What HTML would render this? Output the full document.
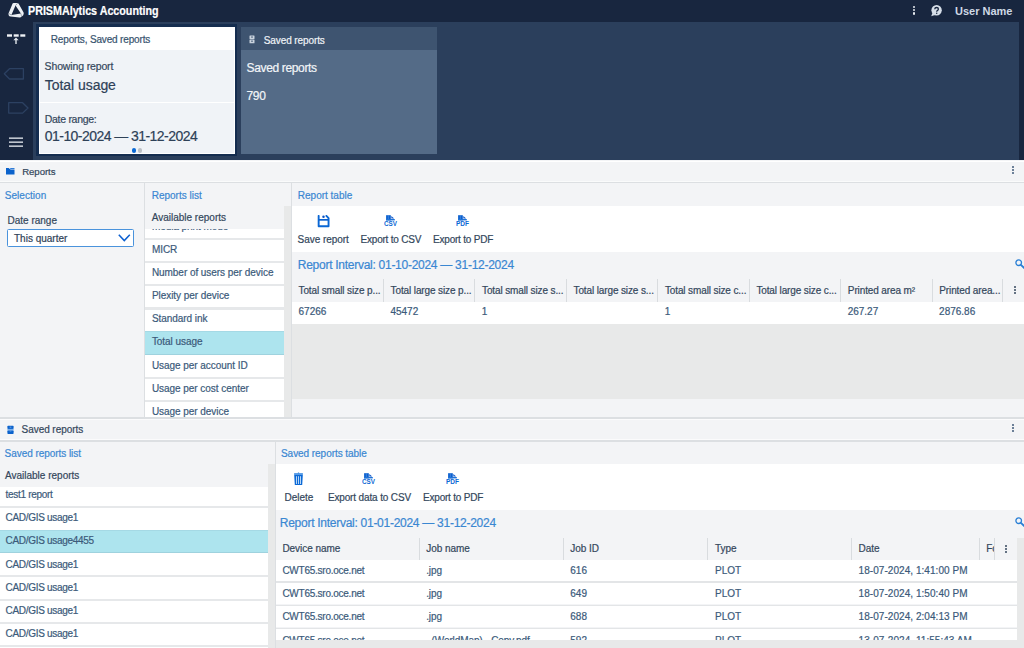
<!DOCTYPE html>
<html><head><meta charset="utf-8"><style>
html,body{margin:0;padding:0;width:1024px;height:648px;overflow:hidden;background:#f3f4f6}
body{position:relative;font-family:"Liberation Sans", sans-serif}
div{position:absolute}
.t{white-space:nowrap;line-height:1;-webkit-text-stroke:0.2px currentColor}
</style></head><body>
<div style="left:0px;top:0px;width:1024px;height:160px;background:#18263f;"></div>
<div style="left:33px;top:22px;width:986px;height:138px;background:#2b3f5c;"></div>
<svg style="position:absolute;left:4px;top:0px" width="24" height="22" viewBox="0 0 24 22">
<path fill-rule="evenodd" fill="#eef1f5" d="M9.6 2.9 L13.4 2.9 Q14.2 3 14.8 4 L19.6 12.4 Q20.1 13.6 19.2 15.2 L17.3 17.1 Q16.6 17.6 15.6 17.5 L6.6 16.6 Q5.2 16.4 4.8 15.4 L4.5 14.2 Q4.4 13.4 4.9 12.5 L8.6 3.6 Q9 2.9 9.6 2.9 Z M11.5 5.6 L7.4 15 L16.9 13.5 Z"/>
<path d="M11.5 5.6 L13.6 3.2 M7.4 15 L5 13.6 M16.9 13.5 L17.6 16.9" stroke="#4a586c" stroke-width="0.5" fill="none"/>
</svg>
<div class="t" style="left:28px;top:5.04px;font-size:12px;color:#ffffff;font-weight:700;transform:scaleX(0.893);transform-origin:0 0;">PRISMAlytics Accounting</div>
<div style="left:912.75px;top:5.8500000000000005px;width:2.1px;height:2.1px;background:#e6ebf1;border-radius:50%;"></div>
<div style="left:912.75px;top:9.15px;width:2.1px;height:2.1px;background:#e6ebf1;border-radius:50%;"></div>
<div style="left:912.75px;top:12.45px;width:2.1px;height:2.1px;background:#e6ebf1;border-radius:50%;"></div>
<svg style="position:absolute;left:930px;top:5px" width="13" height="12" viewBox="0 0 13 12">
<circle cx="6.6" cy="5.3" r="5.2" fill="#d6dee8"/><path d="M2.4 8 L1.2 11.3 L5 9.9 Z" fill="#d6dee8"/>
<path d="M4.7 4.2 Q4.8 2.5 6.6 2.5 Q8.4 2.5 8.4 4.1 Q8.4 5.1 7.3 5.6 Q6.7 5.9 6.7 6.8" fill="none" stroke="#18263f" stroke-width="1.3"/>
<circle cx="6.7" cy="8.3" r="0.75" fill="#18263f"/></svg>
<div class="t" style="left:955px;top:5.59px;font-size:11px;color:#cfd9e5;font-weight:700;-webkit-text-stroke:0;">User Name</div>
<svg style="position:absolute;left:0;top:28px" width="33" height="132" viewBox="0 0 33 132">
<rect x="7" y="6.3" width="5" height="2.4" fill="#eef1f5"/><rect x="13.7" y="6.3" width="5" height="2.4" fill="#eef1f5"/><rect x="20.3" y="6.3" width="5" height="2.4" fill="#eef1f5"/>
<path d="M16 9.5 L13.3 12.3 H15.3 V16 H16.7 V12.3 H18.7 Z" fill="#dfe4ea"/>
<path d="M4.3 45.7 L9.5 40.7 H23.4 V51 H9.5 Z" fill="none" stroke="#2c4162" stroke-width="1.3" stroke-linejoin="round"/>
<path d="M8.7 74.7 H22.6 L28 80 L22.6 85.1 H8.7 Z" fill="none" stroke="#2c4162" stroke-width="1.3" stroke-linejoin="round"/>
<rect x="9" y="109.5" width="14" height="1.3" fill="#e8ecf1"/><rect x="9" y="113.5" width="14" height="1.3" fill="#e8ecf1"/><rect x="9" y="117.5" width="14" height="1.3" fill="#e8ecf1"/>
</svg>
<div style="left:36.4px;top:24.4px;width:200.8px;height:132px;background:#152d4f;"></div>
<div style="left:39px;top:27px;width:196px;height:127px;background:#f0f3f7;"></div>
<div style="left:39px;top:27px;width:196px;height:23px;background:#ffffff;"></div>
<div style="left:39px;top:101.5px;width:196px;height:1.2px;background:#ffffff;"></div>
<div style="left:39px;top:27px;width:1px;height:127px;background:#ffffff;"></div>
<div style="left:234.3px;top:27px;width:0.7px;height:127px;background:#ffffff;"></div>
<div style="left:39px;top:153.3px;width:196px;height:0.7px;background:#ffffff;"></div>
<div class="t" style="left:50.8px;top:35.14px;font-size:10px;color:#37536e;font-weight:400;letter-spacing:-0.16px;">Reports, Saved reports</div>
<div class="t" style="left:44.6px;top:61.11px;font-size:10.5px;color:#34475c;font-weight:400;letter-spacing:-0.14px;">Showing report</div>
<div class="t" style="left:44.8px;top:77.55px;font-size:14px;color:#2e4157;font-weight:400;letter-spacing:-0.05px;">Total usage</div>
<div class="t" style="left:44.8px;top:114.11px;font-size:10.5px;color:#34475c;font-weight:400;letter-spacing:-0.3px;">Date range:</div>
<div class="t" style="left:44.8px;top:128.55px;font-size:14px;color:#2e4157;font-weight:400;letter-spacing:-0.55px;">01-10-2024 — 31-12-2024</div>
<div style="left:132.0px;top:148.4px;width:4.4px;height:4.4px;background:#0b6ad6;border-radius:50%;"></div>
<div style="left:137.9px;top:148.4px;width:4.2px;height:4.2px;background:#bcc1c6;border-radius:50%;"></div>
<div style="left:241px;top:27px;width:196px;height:127px;background:#546b87;"></div>
<div style="left:241px;top:27px;width:196px;height:23px;background:#3e5470;"></div>
<svg style="position:absolute;left:249px;top:34.5px" width="6" height="9" viewBox="0 0 6 9">
<rect x="0.5" y="0.5" width="5" height="3.4" rx="0.5" fill="#c9d3de"/><rect x="0.5" y="4.6" width="5" height="3.6" rx="0.5" fill="#c9d3de"/><rect x="2" y="1.6" width="2" height="0.9" fill="#3e5470"/><rect x="2" y="5.7" width="2" height="0.9" fill="#3e5470"/></svg>
<div class="t" style="left:263.8px;top:35.64px;font-size:10px;color:#eef2f6;font-weight:400;letter-spacing:-0.1px;">Saved reports</div>
<div class="t" style="left:246.5px;top:62.34px;font-size:12px;color:#f2f5f8;font-weight:400;letter-spacing:-0.35px;">Saved reports</div>
<div class="t" style="left:246.5px;top:90.34px;font-size:12px;color:#f2f5f8;font-weight:400;letter-spacing:-0.3px;">790</div>
<div style="left:0px;top:160px;width:1024px;height:488px;background:#f3f4f6;"></div>
<div style="left:0px;top:160.8px;width:1024px;height:1.2px;background:#ffffff;"></div>
<div style="left:0px;top:181px;width:1024px;height:0.8px;background:#fafbfb;"></div>
<div style="left:0px;top:181.8px;width:1024px;height:1px;background:#dcdfe2;"></div>
<svg style="position:absolute;left:5.7px;top:168px" width="9" height="7" viewBox="0 0 9 7">
<path d="M0 0.1 H2.6 L4.6 1.5 H8.5 V6.4 H0 Z" fill="#0b62cc"/><rect x="4.2" y="0.1" width="4.3" height="0.9" fill="#1a6fd4"/></svg>
<div class="t" style="left:22.2px;top:166.57px;font-size:9.6px;color:#33475c;font-weight:400;letter-spacing:-0.05px;">Reports</div>
<div style="left:1012.0500000000001px;top:165.64999999999998px;width:2.1px;height:2.1px;background:#3f5a78;border-radius:50%;"></div>
<div style="left:1012.0500000000001px;top:168.95px;width:2.1px;height:2.1px;background:#3f5a78;border-radius:50%;"></div>
<div style="left:1012.0500000000001px;top:172.24999999999997px;width:2.1px;height:2.1px;background:#3f5a78;border-radius:50%;"></div>
<div style="left:144px;top:182.8px;width:1px;height:235px;background:#dcdfe2;"></div>
<div class="t" style="left:4.7px;top:190.53px;font-size:10px;color:#3a87d2;font-weight:400;letter-spacing:0.05px;">Selection</div>
<div class="t" style="left:7.5px;top:215.84px;font-size:10px;color:#33475c;font-weight:400;">Date range</div>
<div style="left:7.2px;top:229px;width:126.4px;height:17.6px;background:#ffffff;box-sizing:border-box;border:1px solid #4a93dc;border-radius:1.5px;"></div>
<div class="t" style="left:14px;top:233.53px;font-size:10px;color:#2f4257;font-weight:400;">This quarter</div>
<svg style="position:absolute;left:118px;top:234px" width="13" height="8" viewBox="0 0 13 8">
<path d="M0.8 0.8 L6.3 6.6 L11.8 0.8" fill="none" stroke="#0b5fd0" stroke-width="1.5"/></svg>
<div style="left:291px;top:182.8px;width:1px;height:235px;background:#dcdfe2;"></div>
<div class="t" style="left:151.7px;top:190.53px;font-size:10px;color:#3a87d2;font-weight:400;">Reports list</div>
<div class="t" style="left:151.7px;top:212.94px;font-size:10px;color:#33475c;font-weight:400;">Available reports</div>
<div style="left:284px;top:206px;width:7px;height:212px;background:#e8e9e9;"></div>
<div style="left:145px;top:228.8px;width:139px;height:189px;overflow:hidden;background:#fff">
<div class="t" style="left:6.9px;top:-6.46px;font-size:10px;color:#3b5a7a;font-weight:400;letter-spacing:-0.05px;">media print mode</div>
<div style="left:0px;top:9.099999999999989px;width:139px;height:2.1px;background:#e6e8ea;"></div>
<div class="t" style="left:6.9px;top:15.73px;font-size:10px;color:#3b5a7a;font-weight:400;letter-spacing:-0.05px;">MICR</div>
<div style="left:0px;top:32.299999999999976px;width:139px;height:2.1px;background:#e6e8ea;"></div>
<div class="t" style="left:6.9px;top:38.93px;font-size:10px;color:#3b5a7a;font-weight:400;letter-spacing:-0.05px;">Number of users per device</div>
<div style="left:0px;top:55.499999999999964px;width:139px;height:2.1px;background:#e6e8ea;"></div>
<div class="t" style="left:6.9px;top:62.13px;font-size:10px;color:#3b5a7a;font-weight:400;letter-spacing:-0.05px;">Plexity per device</div>
<div style="left:0px;top:78.70000000000002px;width:139px;height:2.1px;background:#e6e8ea;"></div>
<div class="t" style="left:6.9px;top:85.34px;font-size:10px;color:#3b5a7a;font-weight:400;letter-spacing:-0.05px;">Standard ink</div>
<div style="left:0px;top:102.0px;width:139px;height:23.8px;background:#ade4ee;box-shadow:inset 0 1px 0 #a5d9e5, inset 0 -1px 0 #9fd2de;"></div>
<div class="t" style="left:6.9px;top:108.53px;font-size:10px;color:#3b5a7a;font-weight:400;letter-spacing:-0.05px;">Total usage</div>
<div class="t" style="left:6.9px;top:131.73px;font-size:10px;color:#3b5a7a;font-weight:400;letter-spacing:-0.05px;">Usage per account ID</div>
<div style="left:0px;top:148.30000000000004px;width:139px;height:2.1px;background:#e6e8ea;"></div>
<div class="t" style="left:6.9px;top:154.94px;font-size:10px;color:#3b5a7a;font-weight:400;letter-spacing:-0.05px;">Usage per cost center</div>
<div style="left:0px;top:171.49999999999997px;width:139px;height:2.1px;background:#e6e8ea;"></div>
<div class="t" style="left:6.9px;top:178.13px;font-size:10px;color:#3b5a7a;font-weight:400;letter-spacing:-0.05px;">Usage per device</div>
</div>
<div class="t" style="left:297.8px;top:190.84px;font-size:10px;color:#3a87d2;font-weight:400;">Report table</div>
<div style="left:292px;top:206px;width:732px;height:46px;background:#ffffff;"></div>
<svg style="position:absolute;left:316.5px;top:214.5px" width="13" height="13" viewBox="0 0 13 13">
<path d="M1.65 0.9 V11.2 H11.55 V3.1 L9.4 0.9" fill="none" stroke="#0a67d4" stroke-width="1.9" stroke-linejoin="round" stroke-linecap="round"/>
<rect x="1.65" y="4" width="9.9" height="1.7" fill="#0a62d0"/><circle cx="6.5" cy="1.8" r="1.25" fill="#0a52c4"/></svg>
<div class="t" style="left:297.6px;top:234.73px;font-size:10px;color:#33475c;font-weight:400;letter-spacing:-0.05px;">Save report</div>
<svg style="position:absolute;left:384.1px;top:214.3px" width="15" height="13" viewBox="0 0 15 13">
<path d="M2.1 1.2 H6.8 V6.4 H2.1 Z" fill="#0a5fcf"/><rect x="3.9" y="1.4" width="0.5" height="3.6" fill="#6aa6ea"/><path d="M7.3 1.9 L10.2 4.5 H7.3 Z" fill="#0a55c8"/><rect x="2.1" y="5" width="8.7" height="1.4" fill="#1f73d8"/>
<text x="0" y="12.1" font-family="Liberation Sans" font-weight="700" font-size="7.6" fill="#0a67d4" textLength="13" lengthAdjust="spacingAndGlyphs">CSV</text></svg>
<div class="t" style="left:360.5px;top:234.73px;font-size:10px;color:#33475c;font-weight:400;letter-spacing:-0.2px;">Export to CSV</div>
<svg style="position:absolute;left:456.4px;top:214.3px" width="15" height="13" viewBox="0 0 15 13">
<path d="M2.1 1.2 H6.8 V6.4 H2.1 Z" fill="#0a5fcf"/><rect x="3.9" y="1.4" width="0.5" height="3.6" fill="#6aa6ea"/><path d="M7.3 1.9 L10.2 4.5 H7.3 Z" fill="#0a55c8"/><rect x="2.1" y="5" width="8.7" height="1.4" fill="#1f73d8"/>
<text x="0" y="12.1" font-family="Liberation Sans" font-weight="700" font-size="7.6" fill="#0a67d4" textLength="13" lengthAdjust="spacingAndGlyphs">PDF</text></svg>
<div class="t" style="left:433px;top:234.73px;font-size:10px;color:#33475c;font-weight:400;letter-spacing:-0.2px;">Export to PDF</div>
<div class="t" style="left:297.8px;top:259.04px;font-size:12px;color:#3a87d2;font-weight:400;letter-spacing:-0.27px;">Report Interval: 01-10-2024 — 31-12-2024</div>
<svg style="position:absolute;left:1014.5px;top:258.6px" width="12" height="12" viewBox="0 0 12 12">
<circle cx="3.7" cy="3.7" r="2.8" fill="none" stroke="#2a7fd5" stroke-width="1.3"/><path d="M5.9 5.9 L9.5 9.2" stroke="#2a7fd5" stroke-width="1.9" stroke-linecap="round"/></svg>
<div class="t" style="left:298.55px;top:285.64px;font-size:10px;color:#33475c;font-weight:400;letter-spacing:-0.12px;">Total small size p...</div>
<div class="t" style="left:390.59999999999997px;top:285.64px;font-size:10px;color:#33475c;font-weight:400;letter-spacing:-0.12px;">Total large size p...</div>
<div style="left:382.79999999999995px;top:278.8px;width:1.2px;height:23.2px;background:#d9dcdf;"></div>
<div class="t" style="left:482.05px;top:285.64px;font-size:10px;color:#33475c;font-weight:400;letter-spacing:-0.12px;">Total small size s...</div>
<div style="left:474.25px;top:278.8px;width:1.2px;height:23.2px;background:#d9dcdf;"></div>
<div class="t" style="left:573.5px;top:285.64px;font-size:10px;color:#33475c;font-weight:400;letter-spacing:-0.12px;">Total large size s...</div>
<div style="left:565.6999999999999px;top:278.8px;width:1.2px;height:23.2px;background:#d9dcdf;"></div>
<div class="t" style="left:664.95px;top:285.64px;font-size:10px;color:#33475c;font-weight:400;letter-spacing:-0.12px;">Total small size c...</div>
<div style="left:657.15px;top:278.8px;width:1.2px;height:23.2px;background:#d9dcdf;"></div>
<div class="t" style="left:756.4000000000001px;top:285.64px;font-size:10px;color:#33475c;font-weight:400;letter-spacing:-0.12px;">Total large size c...</div>
<div style="left:748.6px;top:278.8px;width:1.2px;height:23.2px;background:#d9dcdf;"></div>
<div class="t" style="left:847.8500000000001px;top:285.64px;font-size:10px;color:#33475c;font-weight:400;letter-spacing:-0.12px;">Printed area m²</div>
<div style="left:840.0500000000001px;top:278.8px;width:1.2px;height:23.2px;background:#d9dcdf;"></div>
<div class="t" style="left:939.3px;top:285.64px;font-size:10px;color:#33475c;font-weight:400;letter-spacing:-0.12px;">Printed area...</div>
<div style="left:931.4999999999999px;top:278.8px;width:1.2px;height:23.2px;background:#d9dcdf;"></div>
<div style="left:1001.5px;top:278.8px;width:1.2px;height:23.2px;background:#d9dcdf;"></div>
<div style="left:1013.6px;top:285.6px;width:2px;height:2px;background:#34475c;border-radius:50%;"></div>
<div style="left:1013.6px;top:288.85px;width:2px;height:2px;background:#34475c;border-radius:50%;"></div>
<div style="left:1013.6px;top:292.1px;width:2px;height:2px;background:#34475c;border-radius:50%;"></div>
<div style="left:292px;top:302px;width:732px;height:22.2px;background:#ffffff;"></div>
<div class="t" style="left:298.55px;top:307.14px;font-size:10px;color:#3b5a7a;font-weight:400;">67266</div>
<div class="t" style="left:390.4px;top:307.14px;font-size:10px;color:#3b5a7a;font-weight:400;">45472</div>
<div class="t" style="left:481.85px;top:307.14px;font-size:10px;color:#3b5a7a;font-weight:400;">1</div>
<div class="t" style="left:573.3px;top:307.14px;font-size:10px;color:#3b5a7a;font-weight:400;"></div>
<div class="t" style="left:664.75px;top:307.14px;font-size:10px;color:#3b5a7a;font-weight:400;">1</div>
<div class="t" style="left:756.2px;top:307.14px;font-size:10px;color:#3b5a7a;font-weight:400;"></div>
<div class="t" style="left:847.6500000000001px;top:307.14px;font-size:10px;color:#3b5a7a;font-weight:400;">267.27</div>
<div class="t" style="left:939.0999999999999px;top:307.14px;font-size:10px;color:#3b5a7a;font-weight:400;">2876.86</div>
<div style="left:292px;top:324.2px;width:732px;height:74.5px;background:#e8e9e9;"></div>
<div style="left:0px;top:417.2px;width:1024px;height:1.4px;background:#dcdfe2;"></div>
<div style="left:0px;top:418.6px;width:1024px;height:0.8px;background:#fbfbfc;"></div>
<div style="left:0px;top:439.4px;width:1024px;height:0.8px;background:#fbfbfc;"></div>
<div style="left:0px;top:440.2px;width:1024px;height:1.4px;background:#dcdfe2;"></div>
<svg style="position:absolute;left:6.5px;top:425px" width="7" height="10" viewBox="0 0 7 10">
<rect x="0.4" y="0.7" width="6.2" height="3.3" rx="0.7" fill="#0b62cc"/><rect x="0.4" y="3.9" width="6.2" height="1.7" fill="#7db0ea"/><rect x="0.4" y="5.5" width="6.2" height="3.4" rx="0.7" fill="#0b62cc"/>
<rect x="2.6" y="1.8" width="1.8" height="0.7" rx="0.3" fill="#8dbaf0"/><rect x="2.6" y="5.5" width="1.8" height="1" rx="0.3" fill="#5f9de6"/></svg>
<div class="t" style="left:21.6px;top:425.34px;font-size:10px;color:#33475c;font-weight:400;letter-spacing:-0.06px;">Saved reports</div>
<div style="left:1012.0500000000001px;top:423.75px;width:2.1px;height:2.1px;background:#3f5a78;border-radius:50%;"></div>
<div style="left:1012.0500000000001px;top:427.05px;width:2.1px;height:2.1px;background:#3f5a78;border-radius:50%;"></div>
<div style="left:1012.0500000000001px;top:430.35px;width:2.1px;height:2.1px;background:#3f5a78;border-radius:50%;"></div>
<div style="left:274.6px;top:441.4px;width:1px;height:207px;background:#dcdfe2;"></div>
<div class="t" style="left:4.6px;top:448.64px;font-size:10px;color:#3a87d2;font-weight:400;letter-spacing:-0.05px;">Saved reports list</div>
<div class="t" style="left:5px;top:471.14px;font-size:10px;color:#33475c;font-weight:400;">Available reports</div>
<div style="left:268px;top:464px;width:6.6px;height:184px;background:#e8e9e9;"></div>
<div style="left:0;top:486.8px;width:268px;height:161.2px;overflow:hidden;background:#fff">
<div class="t" style="left:5.5px;top:3.13px;font-size:10px;color:#3b5a7a;font-weight:400;letter-spacing:-0.3px;">test1 report</div>
<div style="left:0px;top:19.099999999999977px;width:268px;height:2px;background:#e6e8ea;"></div>
<div class="t" style="left:5.5px;top:26.33px;font-size:10px;color:#3b5a7a;font-weight:400;letter-spacing:-0.3px;">CAD/GIS usage1</div>
<div style="left:0px;top:42.89999999999996px;width:268px;height:23.2px;background:#ade4ee;box-shadow:inset 0 1px 0 #a5d9e5, inset 0 -1px 0 #9fd2de;"></div>
<div class="t" style="left:5.5px;top:49.53px;font-size:10px;color:#3b5a7a;font-weight:400;letter-spacing:-0.3px;">CAD/GIS usage4455</div>
<div class="t" style="left:5.5px;top:72.74px;font-size:10px;color:#3b5a7a;font-weight:400;letter-spacing:-0.3px;">CAD/GIS usage1</div>
<div style="left:0px;top:88.69999999999995px;width:268px;height:2px;background:#e6e8ea;"></div>
<div class="t" style="left:5.5px;top:95.93px;font-size:10px;color:#3b5a7a;font-weight:400;letter-spacing:-0.3px;">CAD/GIS usage1</div>
<div style="left:0px;top:111.89999999999999px;width:268px;height:2px;background:#e6e8ea;"></div>
<div class="t" style="left:5.5px;top:119.13px;font-size:10px;color:#3b5a7a;font-weight:400;letter-spacing:-0.3px;">CAD/GIS usage1</div>
<div style="left:0px;top:135.10000000000002px;width:268px;height:2px;background:#e6e8ea;"></div>
<div class="t" style="left:5.5px;top:142.34px;font-size:10px;color:#3b5a7a;font-weight:400;letter-spacing:-0.3px;">CAD/GIS usage1</div>
<div style="left:0px;top:158.29999999999995px;width:268px;height:2px;background:#e6e8ea;"></div>
</div>
<div class="t" style="left:281px;top:448.54px;font-size:10px;color:#3a87d2;font-weight:400;letter-spacing:-0.05px;">Saved reports table</div>
<div style="left:275.6px;top:463.7px;width:748.4px;height:46.6px;background:#ffffff;"></div>
<svg style="position:absolute;left:293px;top:472px" width="11" height="14" viewBox="0 0 11 14">
<circle cx="5.5" cy="1.2" r="0.8" fill="#0a62d0"/><rect x="1.1" y="1.1" width="8.8" height="1.7" fill="#4d96e6"/>
<path d="M1.2 2.8 H9.8 L9.2 13 H1.8 Z" fill="#0d6ad6"/><rect x="3" y="4.2" width="1" height="7.8" fill="#b5d5f7"/><rect x="5" y="4.2" width="1" height="7.8" fill="#b5d5f7"/><rect x="7" y="4.2" width="1" height="7.8" fill="#b5d5f7"/></svg>
<div class="t" style="left:284.6px;top:493.14px;font-size:10px;color:#33475c;font-weight:400;letter-spacing:-0.05px;">Delete</div>
<svg style="position:absolute;left:362.4px;top:472.3px" width="15" height="13" viewBox="0 0 15 13">
<path d="M2.1 1.2 H6.8 V6.4 H2.1 Z" fill="#0a5fcf"/><rect x="3.9" y="1.4" width="0.5" height="3.6" fill="#6aa6ea"/><path d="M7.3 1.9 L10.2 4.5 H7.3 Z" fill="#0a55c8"/><rect x="2.1" y="5" width="8.7" height="1.4" fill="#1f73d8"/>
<text x="0" y="12.1" font-family="Liberation Sans" font-weight="700" font-size="7.6" fill="#0a67d4" textLength="13" lengthAdjust="spacingAndGlyphs">CSV</text></svg>
<div class="t" style="left:327.9px;top:493.14px;font-size:10px;color:#33475c;font-weight:400;letter-spacing:-0.14px;">Export data to CSV</div>
<svg style="position:absolute;left:446.3px;top:472.3px" width="15" height="13" viewBox="0 0 15 13">
<path d="M2.1 1.2 H6.8 V6.4 H2.1 Z" fill="#0a5fcf"/><rect x="3.9" y="1.4" width="0.5" height="3.6" fill="#6aa6ea"/><path d="M7.3 1.9 L10.2 4.5 H7.3 Z" fill="#0a55c8"/><rect x="2.1" y="5" width="8.7" height="1.4" fill="#1f73d8"/>
<text x="0" y="12.1" font-family="Liberation Sans" font-weight="700" font-size="7.6" fill="#0a67d4" textLength="13" lengthAdjust="spacingAndGlyphs">PDF</text></svg>
<div class="t" style="left:423px;top:493.14px;font-size:10px;color:#33475c;font-weight:400;letter-spacing:-0.2px;">Export to PDF</div>
<div class="t" style="left:279.8px;top:517.04px;font-size:12px;color:#3a87d2;font-weight:400;letter-spacing:-0.27px;">Report Interval: 01-01-2024 — 31-12-2024</div>
<svg style="position:absolute;left:1014.5px;top:516.6px" width="12" height="12" viewBox="0 0 12 12">
<circle cx="3.7" cy="3.7" r="2.8" fill="none" stroke="#2a7fd5" stroke-width="1.3"/><path d="M5.9 5.9 L9.5 9.2" stroke="#2a7fd5" stroke-width="1.9" stroke-linecap="round"/></svg>
<div style="left:1017px;top:537.7px;width:7px;height:110.3px;background:#e8e9e9;"></div>
<div class="t" style="left:282.40000000000003px;top:544.13px;font-size:10px;color:#33475c;font-weight:400;letter-spacing:-0.05px;">Device name</div>
<div class="t" style="left:426.2px;top:544.13px;font-size:10px;color:#33475c;font-weight:400;letter-spacing:-0.05px;">Job name</div>
<div style="left:418.9px;top:537.7px;width:1.2px;height:22px;background:#d9dcdf;"></div>
<div class="t" style="left:570.3px;top:544.13px;font-size:10px;color:#33475c;font-weight:400;letter-spacing:-0.05px;">Job ID</div>
<div style="left:563.1px;top:537.7px;width:1.2px;height:22px;background:#d9dcdf;"></div>
<div class="t" style="left:715.0px;top:544.13px;font-size:10px;color:#33475c;font-weight:400;letter-spacing:-0.05px;">Type</div>
<div style="left:706.8px;top:537.7px;width:1.2px;height:22px;background:#d9dcdf;"></div>
<div class="t" style="left:858.5999999999999px;top:544.13px;font-size:10px;color:#33475c;font-weight:400;letter-spacing:-0.05px;">Date</div>
<div style="left:851.0px;top:537.7px;width:1.2px;height:22px;background:#d9dcdf;"></div>
<div class="t" style="left:986.1999999999999px;top:544.13px;font-size:10px;color:#33475c;font-weight:400;letter-spacing:-0.05px;overflow:hidden;width:9px;">Fo</div>
<div style="left:978.8px;top:537.7px;width:1.2px;height:22px;background:#d9dcdf;"></div>
<div style="left:993.7px;top:537.7px;width:1.2px;height:22px;background:#d9dcdf;"></div>
<div style="left:1005.0px;top:544.5px;width:2px;height:2px;background:#34475c;border-radius:50%;"></div>
<div style="left:1005.0px;top:547.75px;width:2px;height:2px;background:#34475c;border-radius:50%;"></div>
<div style="left:1005.0px;top:551.0px;width:2px;height:2px;background:#34475c;border-radius:50%;"></div>
<div style="left:275.6px;top:559.5px;width:741.4px;height:80px;overflow:hidden">
<div style="left:0px;top:0.0px;width:741.4px;height:21.4px;background:#ffffff;"></div>
<div style="left:0px;top:21.9px;width:741.4px;height:1.3px;background:#e3e5e7;"></div>
<div class="t" style="left:6.8px;top:6.54px;font-size:10px;color:#3b5a7a;font-weight:400;letter-spacing:-0.25px;">CWT65.sro.oce.net</div>
<div class="t" style="left:150.59999999999997px;top:6.54px;font-size:10px;color:#3b5a7a;font-weight:400;letter-spacing:-0.1px;">.jpg</div>
<div class="t" style="left:294.7px;top:6.54px;font-size:10px;color:#3b5a7a;font-weight:400;">616</div>
<div class="t" style="left:439.40000000000003px;top:6.54px;font-size:10px;color:#3b5a7a;font-weight:400;">PLOT</div>
<div class="t" style="left:582.9999999999999px;top:6.54px;font-size:10px;color:#3b5a7a;font-weight:400;letter-spacing:0.05px;">18-07-2024, 1:41:00 PM</div>
<div style="left:0px;top:23.2px;width:741.4px;height:21.4px;background:#ffffff;"></div>
<div style="left:0px;top:45.099999999999994px;width:741.4px;height:1.3px;background:#e3e5e7;"></div>
<div class="t" style="left:6.8px;top:29.74px;font-size:10px;color:#3b5a7a;font-weight:400;letter-spacing:-0.25px;">CWT65.sro.oce.net</div>
<div class="t" style="left:150.59999999999997px;top:29.74px;font-size:10px;color:#3b5a7a;font-weight:400;letter-spacing:-0.1px;">.jpg</div>
<div class="t" style="left:294.7px;top:29.74px;font-size:10px;color:#3b5a7a;font-weight:400;">649</div>
<div class="t" style="left:439.40000000000003px;top:29.74px;font-size:10px;color:#3b5a7a;font-weight:400;">PLOT</div>
<div class="t" style="left:582.9999999999999px;top:29.74px;font-size:10px;color:#3b5a7a;font-weight:400;letter-spacing:0.05px;">18-07-2024, 1:50:40 PM</div>
<div style="left:0px;top:46.4px;width:741.4px;height:21.4px;background:#ffffff;"></div>
<div style="left:0px;top:68.3px;width:741.4px;height:1.3px;background:#e3e5e7;"></div>
<div class="t" style="left:6.8px;top:52.94px;font-size:10px;color:#3b5a7a;font-weight:400;letter-spacing:-0.25px;">CWT65.sro.oce.net</div>
<div class="t" style="left:150.59999999999997px;top:52.94px;font-size:10px;color:#3b5a7a;font-weight:400;letter-spacing:-0.1px;">.jpg</div>
<div class="t" style="left:294.7px;top:52.94px;font-size:10px;color:#3b5a7a;font-weight:400;">688</div>
<div class="t" style="left:439.40000000000003px;top:52.94px;font-size:10px;color:#3b5a7a;font-weight:400;">PLOT</div>
<div class="t" style="left:582.9999999999999px;top:52.94px;font-size:10px;color:#3b5a7a;font-weight:400;letter-spacing:0.05px;">18-07-2024, 2:04:13 PM</div>
<div style="left:0px;top:69.6px;width:741.4px;height:21.4px;background:#ffffff;"></div>
<div style="left:0px;top:91.5px;width:741.4px;height:1.3px;background:#e3e5e7;"></div>
<div class="t" style="left:6.8px;top:76.13px;font-size:10px;color:#3b5a7a;font-weight:400;letter-spacing:-0.25px;">CWT65.sro.oce.net</div>
<div class="t" style="left:150.59999999999997px;top:76.13px;font-size:10px;color:#3b5a7a;font-weight:400;letter-spacing:-0.1px;">..(WorldMap) - Copy.pdf</div>
<div class="t" style="left:294.7px;top:76.13px;font-size:10px;color:#3b5a7a;font-weight:400;">592</div>
<div class="t" style="left:439.40000000000003px;top:76.13px;font-size:10px;color:#3b5a7a;font-weight:400;">PLOT</div>
<div class="t" style="left:582.9999999999999px;top:76.13px;font-size:10px;color:#3b5a7a;font-weight:400;letter-spacing:0.05px;">13-07-2024, 11:55:43 AM</div>
</div>
<div style="left:275.6px;top:639.5px;width:741.4px;height:8.5px;background:#e8e9e9;"></div>
</body></html>
